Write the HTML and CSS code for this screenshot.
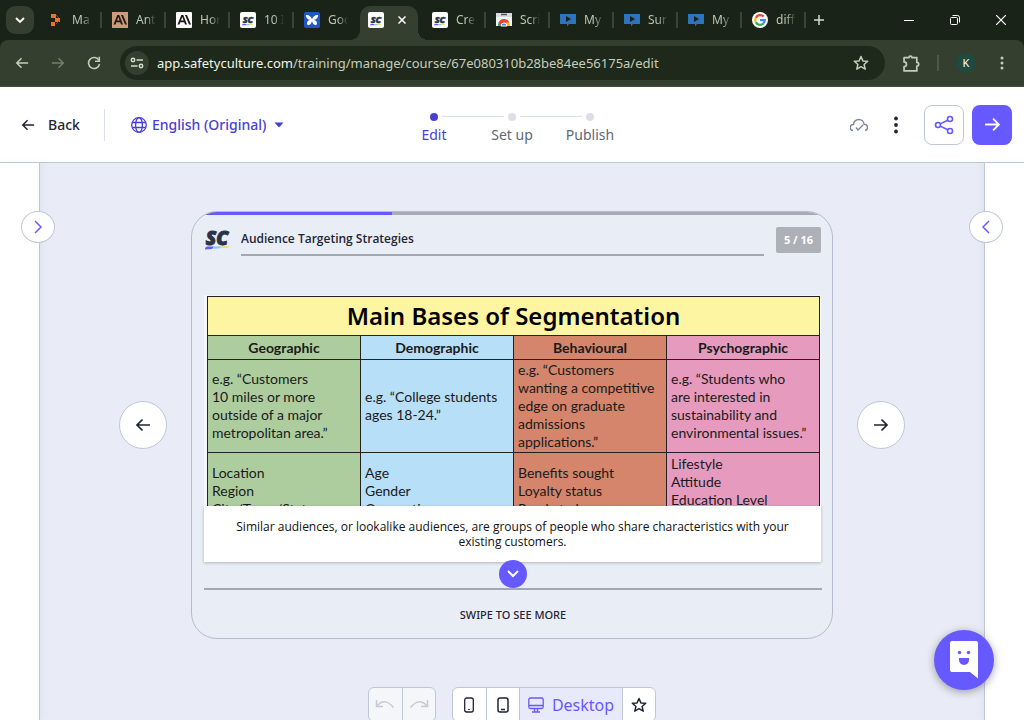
FILE: index.html
```
<!DOCTYPE html>
<html lang="en">
<head>
<meta charset="utf-8">
<title>Edit course</title>
<link rel="stylesheet" href="styles.css">
</head>
<body>
<svg class="defs" aria-hidden="true">
  <symbol id="fav-sc" viewBox="0 0 16 16">
    <rect width="16" height="16" rx="2" fill="#fff"/>
    <text x="8" y="10.500" text-anchor="middle" class="logo-text" font-size="9">SC</text>
    <path d="M2 13.300l.5-1.300h4l-.5 1.300z" fill="#6559ff"/><path d="M6 13.300l.5-1.300h3.500l-.5 1.300z" fill="#6fd0ff"/><path d="M9.500 12.700l.5-1h3.500l-.5 1z" fill="#ffd84a"/>
  </symbol>
  <symbol id="fav-video" viewBox="0 0 16 16">
    <path d="M0 2h16v10H9l-2 2.500V12H0z" fill="#2f72bd"/><path d="M6 4l5 3-5 3z" fill="#14231c"/>
  </symbol>
  <symbol id="arrow" viewBox="0 0 16 16">
    <path d="M1 8h13M8.500 2.500L14 8l-5.500 5.500" fill="none" stroke="currentColor" stroke-width="1.700"/>
  </symbol>
  <symbol id="arrow-left" viewBox="0 0 16 16">
    <path d="M15 8H2M7.500 2.500L2 8l5.500 5.500" fill="none" stroke="currentColor" stroke-width="1.700"/>
  </symbol>
  <symbol id="star" viewBox="0 0 16 16">
    <path d="M8 1.500l1.900 4.400 4.800.4-3.600 3.200 1.100 4.700L8 11.700l-4.200 2.500 1.100-4.700L1.300 6.300l4.800-.4z" fill="none" stroke="currentColor" stroke-width="1.500" stroke-linejoin="round"/>
  </symbol>
</svg>

<div class="app">
  <div class="tabstrip">
    <button class="tab-search" aria-label="Search tabs"><svg width="10" height="6" viewBox="0 0 10 6"><path d="M1 1l4 4 4-4" fill="none" stroke="currentColor" stroke-width="1.800"/></svg></button>
    <div class="tabs">
      <button class="tab"><svg width="16" height="16" viewBox="0 0 16 16"><path d="M3 2h5v4H3zM3 10h4v4H3zM7 6h5v4H7z" fill="#f0702c"/><path d="M8 3l3 3M8 12l3-3" stroke="#8a451f"/></svg><span class="tab-label">Ma</span></button>
      <button class="tab"><svg width="16" height="16" viewBox="0 0 16 16"><rect width="16" height="16" fill="#cc9b7a"/><path d="M1.500 12.500L5.300 3h2L11 12.500H9l-.8-2.200H4.300l-.8 2.200zM5 8.600h2.600L6.300 5zM9 3h2l4 9.500h-2z" fill="#1f1a17" fill-rule="evenodd"/></svg><span class="tab-label">Ant</span></button>
      <button class="tab"><svg width="16" height="16" viewBox="0 0 16 16"><rect width="16" height="16" rx="1" fill="#fff"/><path d="M1.500 12.500L5.300 3h2L11 12.500H9l-.8-2.200H4.300l-.8 2.200zM5 8.600h2.600L6.300 5zM9 3h2l4 9.500h-2z" fill="#1f1a17" fill-rule="evenodd"/></svg><span class="tab-label">Hor</span></button>
      <button class="tab"><svg width="16" height="16"><use href="#fav-sc"/></svg><span class="tab-label">10 I</span></button>
      <button class="tab tab-last"><svg width="16" height="16" viewBox="0 0 16 16"><rect width="16" height="16" rx="2" fill="#1f57c8"/><path d="M8 7.500C7 4 4.500 2.500 1.800 3c.2 2.800 1.800 5 4.700 5-2.500.2-3.500 1.500-3.500 3.500 0 1 .8 1.800 2 1.500C6.500 12.700 7.500 11 8 9c.5 2 1.500 3.700 3 4 1.200.3 2-.5 2-1.500 0-2-1-3.300-3.500-3.500 2.900 0 4.500-2.200 4.700-5C11.500 2.500 9 4 8 7.500z" fill="#fff"/></svg><span class="tab-label">Goo</span></button>
      <button class="tab tab-active" aria-label="SafetyCulture"><svg width="16" height="16"><use href="#fav-sc"/></svg><svg class="tab-close" width="8" height="8" viewBox="0 0 8 8"><path d="M.5.500l7 7M7.500.500l-7 7" stroke="currentColor" stroke-width="1.500"/></svg></button>
      <button class="tab"><svg width="16" height="16"><use href="#fav-sc"/></svg><span class="tab-label">Cre</span></button>
      <button class="tab"><svg width="16" height="16" viewBox="0 0 16 16"><path d="M0 1h16v13H0z" fill="#f1f3f4"/><path d="M0 1h16v4H0z" fill="#d8dbde"/><path d="M5 2.500h6" stroke="#555" stroke-width="1.500"/><path d="M2 14a6 6 0 0 1 12 0z" fill="#fbbc05"/><path d="M2 14a6 6 0 0 1 1-4l3.500 4z" fill="#34a853"/><path d="M2.600 10.500a6 6 0 0 1 10.800 0H8L5 14z" fill="#ea4335"/><path d="M5 14a3 3 0 0 1 6 0z" fill="#4285f4" stroke="#fff"/></svg><span class="tab-label">Scri</span></button>
      <button class="tab"><svg width="16" height="16"><use href="#fav-video"/></svg><span class="tab-label">My</span></button>
      <button class="tab"><svg width="16" height="16"><use href="#fav-video"/></svg><span class="tab-label">Sur</span></button>
      <button class="tab"><svg width="16" height="16"><use href="#fav-video"/></svg><span class="tab-label">My</span></button>
      <button class="tab"><svg width="16" height="16" viewBox="0 0 16 16"><circle cx="8" cy="8" r="8" fill="#fff"/><g fill="none" stroke-width="2.200"><path d="M11.500 4.600A4.800 4.800 0 0 0 3.800 5.700" stroke="#ea4335"/><path d="M3.800 5.700a4.800 4.800 0 0 0 0 4.600" stroke="#fbbc05"/><path d="M3.800 10.300a4.800 4.800 0 0 0 7.500 1.200" stroke="#34a853"/><path d="M11.300 11.500A4.800 4.800 0 0 0 12.800 8.200H8" stroke="#4285f4"/></g></svg><span class="tab-label">diff</span></button>
    </div>
    <button class="new-tab" aria-label="New tab"><svg width="10" height="10" viewBox="0 0 10 10"><path d="M5 0v10M0 5h10" stroke="currentColor" stroke-width="1.500"/></svg></button>
    <div class="window-controls">
      <button aria-label="Minimize"><svg width="10" height="10"><path d="M0 5.500h10" stroke="currentColor"/></svg></button>
      <button aria-label="Restore"><svg width="10" height="10" viewBox="0 0 10 10"><rect x=".5" y="2.500" width="7" height="7" rx="1" fill="none" stroke="currentColor"/><path d="M2.500.500h5a2 2 0 0 1 2 2v5" fill="none" stroke="currentColor"/></svg></button>
      <button aria-label="Close"><svg width="10" height="10"><path d="M0 0l10 10M10 0L0 10" stroke="currentColor" stroke-width="1.200"/></svg></button>
    </div>
  </div>

  <div class="browser-bar">
    <button class="nav-button" aria-label="Back"><svg width="14" height="14"><use href="#arrow-left"/></svg></button>
    <button class="nav-button nav-disabled" aria-label="Forward"><svg width="14" height="14"><use href="#arrow"/></svg></button>
    <button class="nav-button" aria-label="Reload"><svg width="14" height="14" viewBox="0 0 14 14"><path d="M12 4.500A5.500 5.500 0 1 0 12.500 8" fill="none" stroke="currentColor" stroke-width="1.600"/><path d="M12.300.800v4.500H8" fill="none" stroke="currentColor" stroke-width="1.600"/></svg></button>
    <div class="address">
      <button class="site-info" aria-label="Site information"><svg width="14" height="12" viewBox="0 0 14 12"><g fill="none" stroke="currentColor" stroke-width="1.500"><circle cx="3" cy="3" r="1.700"/><path d="M6.500 3H13"/><circle cx="11" cy="9" r="1.700"/><path d="M1 9h6.500"/></g></svg></button>
      <div class="url" role="textbox" aria-label="Address"><span class="url-host">app.safetyculture.com</span>/training/manage/course/67e080310b28be84ee56175a/edit</div>
      <button class="bookmark" aria-label="Bookmark"><svg width="16" height="16"><use href="#star"/></svg></button>
    </div>
    <button class="extensions" aria-label="Extensions"><svg width="17" height="17" viewBox="0 0 16 16"><path d="M1 2.500h4.500a1.500 1.500 0 0 1 3 0H13v4.500a1.500 1.500 0 0 1 0 3.500V15H1v-4a2 2 0 0 0 0-4.500z" fill="none" stroke="currentColor" stroke-width="1.600" stroke-linejoin="round"/></svg></button>
    <span class="bar-divider"></span>
    <button class="profile">K</button>
    <button class="browser-menu" aria-label="Menu"><svg width="4" height="14" fill="currentColor"><circle cx="2" cy="2" r="1.500"/><circle cx="2" cy="7" r="1.500"/><circle cx="2" cy="12" r="1.500"/></svg></button>
  </div>

  <header class="header">
    <div class="header-left">
      <a class="back" href="#"><svg width="14" height="14"><use href="#arrow-left"/></svg>Back</a>
      <button class="language"><svg width="16" height="16" viewBox="0 0 16 16"><g fill="none" stroke="currentColor" stroke-width="1.300"><circle cx="8" cy="8" r="7.300"/><ellipse cx="8" cy="8" rx="3.400" ry="7.300"/><path d="M1.500 5.500h13M1.500 10.500h13"/></g></svg>English (Original)<svg class="caret" width="10" height="6"><path d="M.5.500h9L5 5.500z" fill="currentColor"/></svg></button>
    </div>
    <ol class="steps">
      <li class="step step-current">Edit</li>
      <li class="step">Set up</li>
      <li class="step">Publish</li>
    </ol>
    <div class="header-right">
      <svg class="cloud" width="18" height="14" viewBox="0 0 18 14"><path d="M3 12.500A3 3 0 0 1 3.500 6.500C3.500 3.500 6 1.500 8.800 1.500s5 2 5.200 4.700a3.200 3.200 0 0 1 1 6.300M6 9.500l2 2.500 5-5" fill="none" stroke="currentColor" stroke-width="1.400"/></svg>
      <button class="more" aria-label="More"><svg width="4" height="18" fill="currentColor"><circle cx="2" cy="2.500" r="1.900"/><circle cx="2" cy="9" r="1.900"/><circle cx="2" cy="15.500" r="1.900"/></svg></button>
      <button class="square-button" aria-label="Share"><svg width="20" height="20" viewBox="0 0 20 20"><g fill="none" stroke="currentColor" stroke-width="1.600"><circle cx="4" cy="10" r="2.500"/><circle cx="16" cy="4" r="2.500"/><circle cx="16" cy="16" r="2.500"/><path d="M6.200 8.900l7.500-3.700M6.200 11.100l7.500 3.700"/></g></svg></button>
      <button class="square-button square-primary" aria-label="Next"><svg width="17" height="17"><use href="#arrow"/></svg></button>
    </div>
  </header>

  <div class="editor">
    <aside class="panel panel-left"><button class="panel-toggle" aria-label="Open left panel"><svg width="8" height="14"><path d="M1 1l6 6-6 6" fill="none" stroke="currentColor" stroke-width="1.500"/></svg></button></aside>
    <main class="workspace">
      <div class="stage">
        <button class="round" aria-label="Previous slide"><svg width="16" height="16"><use href="#arrow-left"/></svg></button>
        <article class="card">
          <div class="progress"><div class="progress-fill" style="width:31.250%"></div></div>
          <div class="card-header">
            <svg class="logo" width="27" height="20" viewBox="0 0 27 20"><text x="13" y="15" text-anchor="middle" class="logo-text logo-large" font-size="19">SC</text><path d="M1 19.500q0-3 2.500-3H10l-2 2.500z" fill="#6559ff"/><path d="M8.500 18.700l1.500-2.200h7.500L16 18.200z" fill="#6fd0ff"/><path d="M16.500 18l1.500-1.700h7.500q-1 1.700-3 1.700z" fill="#ffd84a"/></svg>
            <h1 class="card-title">Audience Targeting Strategies</h1>
            <span class="count">5 / 16</span>
          </div>
          <div class="picture">
            <table class="bases">
              <thead>
                <tr><th class="bases-title" colspan="4">Main Bases of Segmentation</th></tr>
                <tr class="bases-heads"><th class="geo">Geographic</th><th class="demo">Demographic</th><th class="behave">Behavioural</th><th class="psycho">Psychographic</th></tr>
              </thead>
              <tbody>
                <tr class="bases-examples"><td class="geo">e.g. “Customers<br>10 miles or more<br>outside of a major<br>metropolitan area.”</td><td class="demo">e.g. “College students<br>ages 18-24.”</td><td class="behave">e.g. “Customers<br>wanting a competitive<br>edge on graduate<br>admissions<br>applications.”</td><td class="psycho">e.g. “Students who<br>are interested in<br>sustainability and<br>environmental issues.”</td></tr>
                <tr class="bases-traits"><td class="geo">Location<br>Region<br>City/Town/State</td><td class="demo">Age<br>Gender<br>Occupation</td><td class="behave">Benefits sought<br>Loyalty status<br>Ready to buy</td><td class="psycho">Lifestyle<br>Attitude<br>Education Level<br>&nbsp;</td></tr>
              </tbody>
            </table>
          </div>
          <p class="caption">Similar audiences, or lookalike audiences, are groups of people who share characteristics with your existing customers.</p>
          <div class="card-footer">
            <button class="scroll-down" aria-label="Scroll down"><svg width="12" height="8"><path d="M1 1l5 5 5-5" fill="none" stroke="currentColor" stroke-width="2"/></svg></button>
            <span class="swipe">SWIPE TO SEE MORE</span>
          </div>
        </article>
        <button class="round" aria-label="Next slide"><svg width="16" height="16"><use href="#arrow"/></svg></button>
      </div>
      <div class="tools">
        <div class="tool-group tool-group-disabled">
          <button class="tool" disabled aria-label="Undo"><svg width="20" height="12" viewBox="0 0 20 12"><path d="M1.500 1v6.500H8M2 7Q10-2 18.500 8.500" fill="none" stroke="currentColor" stroke-width="1.500"/></svg></button>
          <button class="tool" disabled aria-label="Redo"><svg width="20" height="12" viewBox="0 0 20 12"><path d="M18.500 1v6.500H12M18 7Q10-2 1.500 8.500" fill="none" stroke="currentColor" stroke-width="1.500"/></svg></button>
        </div>
        <div class="tool-group">
          <button class="tool" aria-label="Small phone"><svg width="12" height="16"><rect x="1.700" y="1" width="8.600" height="14" rx="2" fill="none" stroke="currentColor" stroke-width="1.300"/><path d="M5.200 12.500h1.600" stroke="currentColor" stroke-width="1.200"/></svg></button>
          <button class="tool" aria-label="Phone"><svg width="12" height="16"><rect x="1" y="1" width="10" height="14" rx="2" fill="none" stroke="currentColor" stroke-width="1.500"/><path d="M4 12.500h4" stroke="currentColor" stroke-width="1.500"/></svg></button>
          <button class="tool tool-selected"><svg width="16" height="16" viewBox="0 0 16 16"><g fill="none" stroke="currentColor" stroke-width="1.300"><rect x=".8" y="1" width="14.400" height="10.500" rx="1.500"/><path d="M1 8.500h14M6.500 12v3M9.500 12v3M4 15h8"/></g></svg>Desktop</button>
          <button class="tool" aria-label="Favourite"><svg width="16" height="16"><use href="#star"/></svg></button>
        </div>
      </div>
    </main>
    <aside class="panel panel-right"><button class="panel-toggle" aria-label="Open right panel"><svg width="8" height="14"><path d="M7 1L1 7l6 6" fill="none" stroke="currentColor" stroke-width="1.500"/></svg></button></aside>
  </div>
  <button class="chat" aria-label="Chat"><svg width="28" height="38" viewBox="0 0 28 38"><path d="M2 0h24q2 0 2 2v35.500L20 31H2q-2 0-2-2V2q0-2 2-2z" fill="#fff"/><circle cx="9.500" cy="11.500" r="1.700" fill="#6559ff"/><circle cx="18.500" cy="11.500" r="1.700" fill="#6559ff"/><path d="M9 17h10v2a5 5 0 0 1-10 0z" fill="#6559ff"/></svg></button>
</div>
</body>
</html>
```

FILE: styles.css
```
* { box-sizing: border-box; }
body { margin: 0; font: 14px/20px "Noto Sans", sans-serif; color: #1f2533; }
button { font: inherit; color: inherit; background: none; border: 0; padding: 0; margin: 0; display: flex; align-items: center; justify-content: center; }
svg { display: block; flex: none; }
.defs { position: absolute; width: 0; height: 0; }
.logo-text { font-family: "Noto Sans", sans-serif; font-weight: 900; font-style: italic; fill: #2a3444; stroke: #2a3444; stroke-width: .5px; }
.logo-large { stroke-width: 1px; }

.app { height: 100vh; display: flex; flex-direction: column; overflow: hidden; }

/* Browser chrome */
.tabstrip { position: relative; z-index: 1; flex: none; display: flex; align-items: center; height: 40px; padding-left: 6px; background: #1a2317; color: #d5dccb; font-size: 12px; }
.tab-search { width: 28px; height: 28px; border-radius: 9px; background: #353f30; color: #fff; }
.tabs { display: flex; align-self: stretch; margin-left: 6px; }
.tab { position: relative; width: 64px; height: 40px; padding-left: 8px; justify-content: flex-start; gap: 8px; color: #bcc6b2; }
.tab::after { content: ""; position: absolute; right: 2px; top: 12px; width: 2px; height: 16px; background: #3a4535; }
.tab-label { width: 20px; overflow: hidden; white-space: nowrap; text-align: left; mask-image: linear-gradient(90deg, #000 50%, transparent); }
.tab-last::after { display: none; }
.tab-active { width: 58px; height: 34px; margin: 6px 6px 0 0; padding-bottom: 6px; background: #353f30; border-radius: 10px 10px 0 0; gap: 14px; color: #fff; }
.tab-active::before, .tab-active::after { content: ""; position: absolute; top: auto; bottom: 0; width: 10px; height: 10px; background: none; }
.tab-active::before { left: -10px; background: radial-gradient(circle at 0 0, transparent 10px, #353f30 10px); }
.tab-active::after { right: -10px; background: radial-gradient(circle at 100% 0, transparent 10px, #353f30 10px); }
.new-tab { margin-left: 6px; width: 10px; height: 28px; color: #d5dccb; }
.window-controls { display: flex; margin-left: auto; color: #fff; }
.window-controls button { width: 46px; height: 40px; }

.browser-bar { position: relative; flex: none; display: flex; align-items: center; height: 47px; padding: 0 20px 0 6px; background: #353f30; border-bottom: 1px solid #4a4d46; border-radius: 8px 8px 0 0; box-shadow: 0 -10px 0 #1a2317; color: #c3ceb8; }
.nav-button { width: 32px; height: 32px; margin-right: 4px; }
.nav-disabled { color: #71806a; }
.address { flex: 1; display: flex; align-items: center; min-width: 0; height: 34px; margin-left: 6px; padding: 0 16px 0 5px; border-radius: 17px; background: #1f291b; }
.site-info { width: 24px; height: 24px; border-radius: 12px; background: #353f30; color: #d5dccb; }
.url { flex: 1; margin-left: 8px; overflow: hidden; white-space: nowrap; font-size: 13px; color: #c5cdbc; }
.url-host { color: #f1f5ea; }
.extensions { margin-left: 18px; }
.bar-divider { width: 2px; height: 16px; margin: 0 17px; background: #4d5947; }
.profile { width: 20px; height: 20px; border-radius: 10px; background: #1f4a40; color: #fff; font-size: 11px; }
.browser-menu { margin-left: 24px; }

/* App header */
.header { flex: none; display: grid; grid-template-columns: 1fr auto 1fr; align-items: center; height: 76px; padding: 0 12px; background: #fff; border-bottom: 1px solid #bfc6d4; }
.header-left { display: flex; align-items: center; padding-left: 9px; }
.back { display: flex; align-items: center; gap: 13px; height: 32px; padding-right: 24px; border-right: 1px solid #dbdfea; color: #1f2533; font-weight: 500; text-decoration: none; }
.language { margin-left: 26px; gap: 5px; color: #4740d4; font-weight: 500; }
.caret { margin-left: 3px; }
.steps { display: flex; margin: 0; padding: 8px 0 0; list-style: none; }
.step { position: relative; display: flex; flex-direction: column; align-items: center; gap: 4px; width: 78px; color: #5f6878; }
.step::before { content: ""; width: 8px; height: 8px; border-radius: 4px; background: #dbdfea; }
.step:not(:last-child)::after { content: ""; position: absolute; left: 47px; top: 3px; width: 62px; height: 1px; background: #dbdfea; }
.step-current { color: #4740d4; }
.step-current::before { background: #4740d4; }
.header-right { display: flex; align-items: center; justify-content: flex-end; }
.cloud { color: #7c869a; }
.more { width: 20px; height: 32px; margin: 0 18px; }
.square-button { width: 40px; height: 40px; border: 1px solid #bfc6d9; border-radius: 8px; color: #6559ff; }
.square-primary { margin-left: 8px; border: 0; background: #6559ff; color: #fff; }

/* Editor */
.editor { flex: 1; min-height: 0; display: flex; background: #e9ecf6; }
.panel { position: relative; z-index: 1; flex: none; width: 40px; background: #fff; }
.panel-left { border-right: 1px solid #bfc6d9; box-shadow: 2px 0 6px #bfc6d940; }
.panel-right { border-left: 1px solid #bfc6d9; box-shadow: -2px 0 6px #bfc6d940; }
.panel-toggle { position: absolute; top: 48px; width: 34px; height: 32px; border: 1px solid #bfc6d9; border-radius: 50%; background: #fff; color: #6559ff; }
.panel-left .panel-toggle { right: -16px; }
.panel-right .panel-toggle { left: -16px; }
.workspace { flex: 1; min-width: 0; overflow: hidden; padding-top: 48px; }
.stage { display: flex; align-items: center; gap: 24px; padding: 0 79px; }
.round { flex: none; width: 48px; height: 48px; border: 1px solid #bfc6d9; border-radius: 24px; background: #fff; }
.card { flex: 1; min-width: 0; overflow: hidden; border: 1px solid #b6bccf; border-radius: 26px; background: #e9eef6; }
.progress { height: 3px; background: #a9acb3; }
.progress-fill { height: 3px; background: #6559ff; }
.card-header { display: flex; align-items: flex-start; padding: 12px 11px 0 12px; }
.logo { margin: 3px 10px 0 0; }
.card-title { flex: 1; margin: 0 12px 0 0; padding-bottom: 3px; font: 600 12px/24px "Open Sans", sans-serif; border-bottom: 2px solid #a2a7b3; }
.count { width: 45px; border-radius: 2px; background: #adb0b6; color: #fff; font-size: 11px; line-height: 26px; font-weight: 700; text-align: center; }
.picture { height: 211px; margin: 39px 11px 0 12px; padding: 1px 1px 0 3px; overflow: hidden; background: #f4f6fa; }
.bases { width: 100%; table-layout: fixed; border-collapse: collapse; color: #1a1a1a; font: 14px/18px Lato, sans-serif; }
.bases th, .bases td { border: 1px solid #222; padding: 0 4px; }
.bases td { text-align: left; }
.bases .bases-title { height: 39px; padding: 0; background: #fef5a3; color: #000; font: 600 24px/32px "Noto Sans", sans-serif; }
.bases-heads th { height: 24px; font: 700 14px/20px Lato, sans-serif; }
.bases-examples td { height: 93px; }
.bases-traits td { height: 76px; }
.geo { background: #adcd9f; }
.demo { background: #b7dff8; }
.behave { background: #d4856b; }
.psycho { background: #e69bbe; }
.caption { margin: 0 11px 0 12px; padding: 13px 24px; background: #fff; color: #111; font: 12px/15px "Open Sans", sans-serif; text-align: center; box-shadow: 0 1px 3px #0000003d; }
.card-footer { position: relative; display: flex; justify-content: center; margin: 26px 10px 0 12px; height: 50px; padding-top: 15px; border-top: 2px solid #a2a7b3; }
.scroll-down { position: absolute; top: -30px; width: 28px; height: 28px; border-radius: 14px; background: #6559ff; color: #fff; }
.swipe { font-size: 11px; font-weight: 500; }

.tools { display: flex; justify-content: center; gap: 16px; margin-top: 48px; }
.tool-group { display: flex; overflow: hidden; height: 35px; border: 1px solid #bfc6d9; border-radius: 6px; background: #fff; }
.tool { min-width: 33px; }
.tool + .tool { border-left: 1px solid #bfc6d9; }
.tool-group-disabled { background: #f4f6fa; color: #c6cbd3; }
.tool-selected { gap: 8px; padding: 0 8px; background: #e8eafc; color: #6559ff; font-size: 16px; }

.chat { position: fixed; z-index: 2; right: 30px; bottom: 30px; width: 60px; height: 60px; border-radius: 30px; background: #6559ff; box-shadow: 0 2px 8px #00000059; }
```
